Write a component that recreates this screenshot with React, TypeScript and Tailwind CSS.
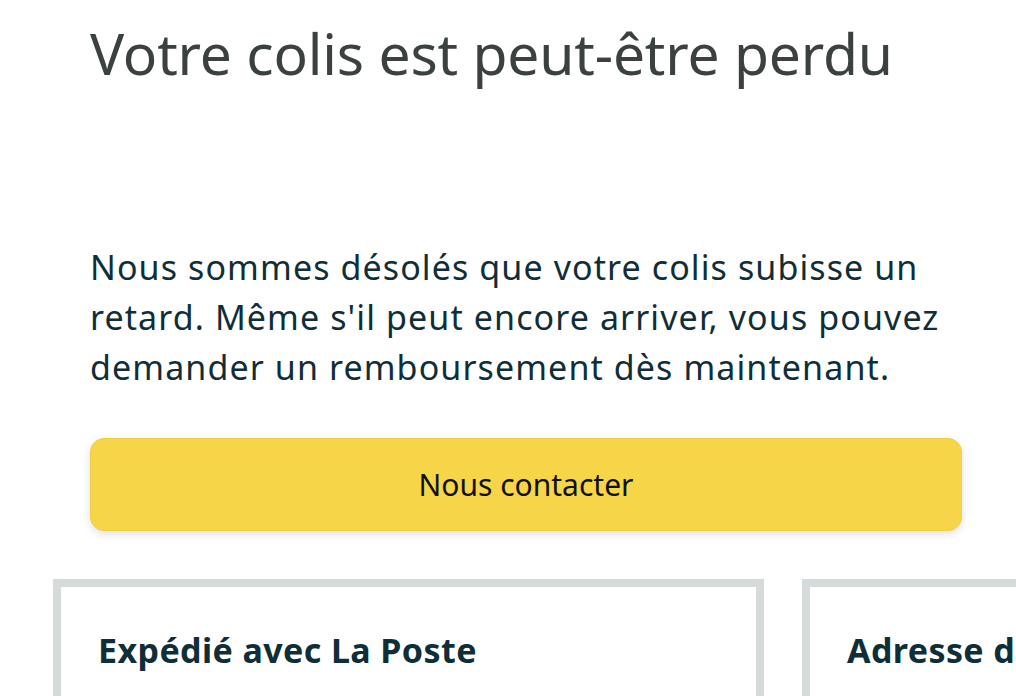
const App = () => {
  return (
    <div className="w-[1016px] h-[696px] overflow-hidden bg-white" style={{ fontFamily: '"Noto Sans", "Open Sans", sans-serif' }}>
      <div className="pl-[90px] pr-[54px]">
        <h1 className="text-[#3b4141] text-[57px] leading-[72px] pt-[17px] tracking-[-0.2px]">Votre colis est peut-être perdu</h1>
        <p className="text-[#0f2e37] text-[34px] leading-[50px] mt-[153px] w-[870px] tracking-[1.1px]">
          Nous sommes désolés que votre colis subisse un retard. Même s'il peut encore arriver, vous pouvez demander un remboursement dès maintenant.
        </p>
        <button className="mt-[46px] w-full h-[93px] rounded-[14px] bg-[#f7d548] border border-[#f0cf45] shadow-[0_3px_8px_rgba(0,0,0,0.12)] text-[#0f1111] text-[30px]">
          Nous contacter
        </button>
      </div>
      <div className="flex gap-[38px] pl-[53px] mt-[48px] overflow-hidden">
        <div className="shrink-0 w-[711px] h-[200px] border-[8px] border-[#d5dbdb] px-[37px] pt-[38px]">
          <h2 className="text-[#0f2e37] text-[34px] tracking-[0.4px] font-bold whitespace-nowrap">Expédié avec La Poste</h2>
        </div>
        <div className="shrink-0 w-[711px] h-[200px] border-[8px] border-[#d5dbdb] px-[37px] pt-[38px]">
          <h2 className="text-[#0f2e37] text-[34px] tracking-[0.4px] font-bold whitespace-nowrap">Adresse de livraison</h2>
        </div>
      </div>
    </div>
  )
}

export default App
